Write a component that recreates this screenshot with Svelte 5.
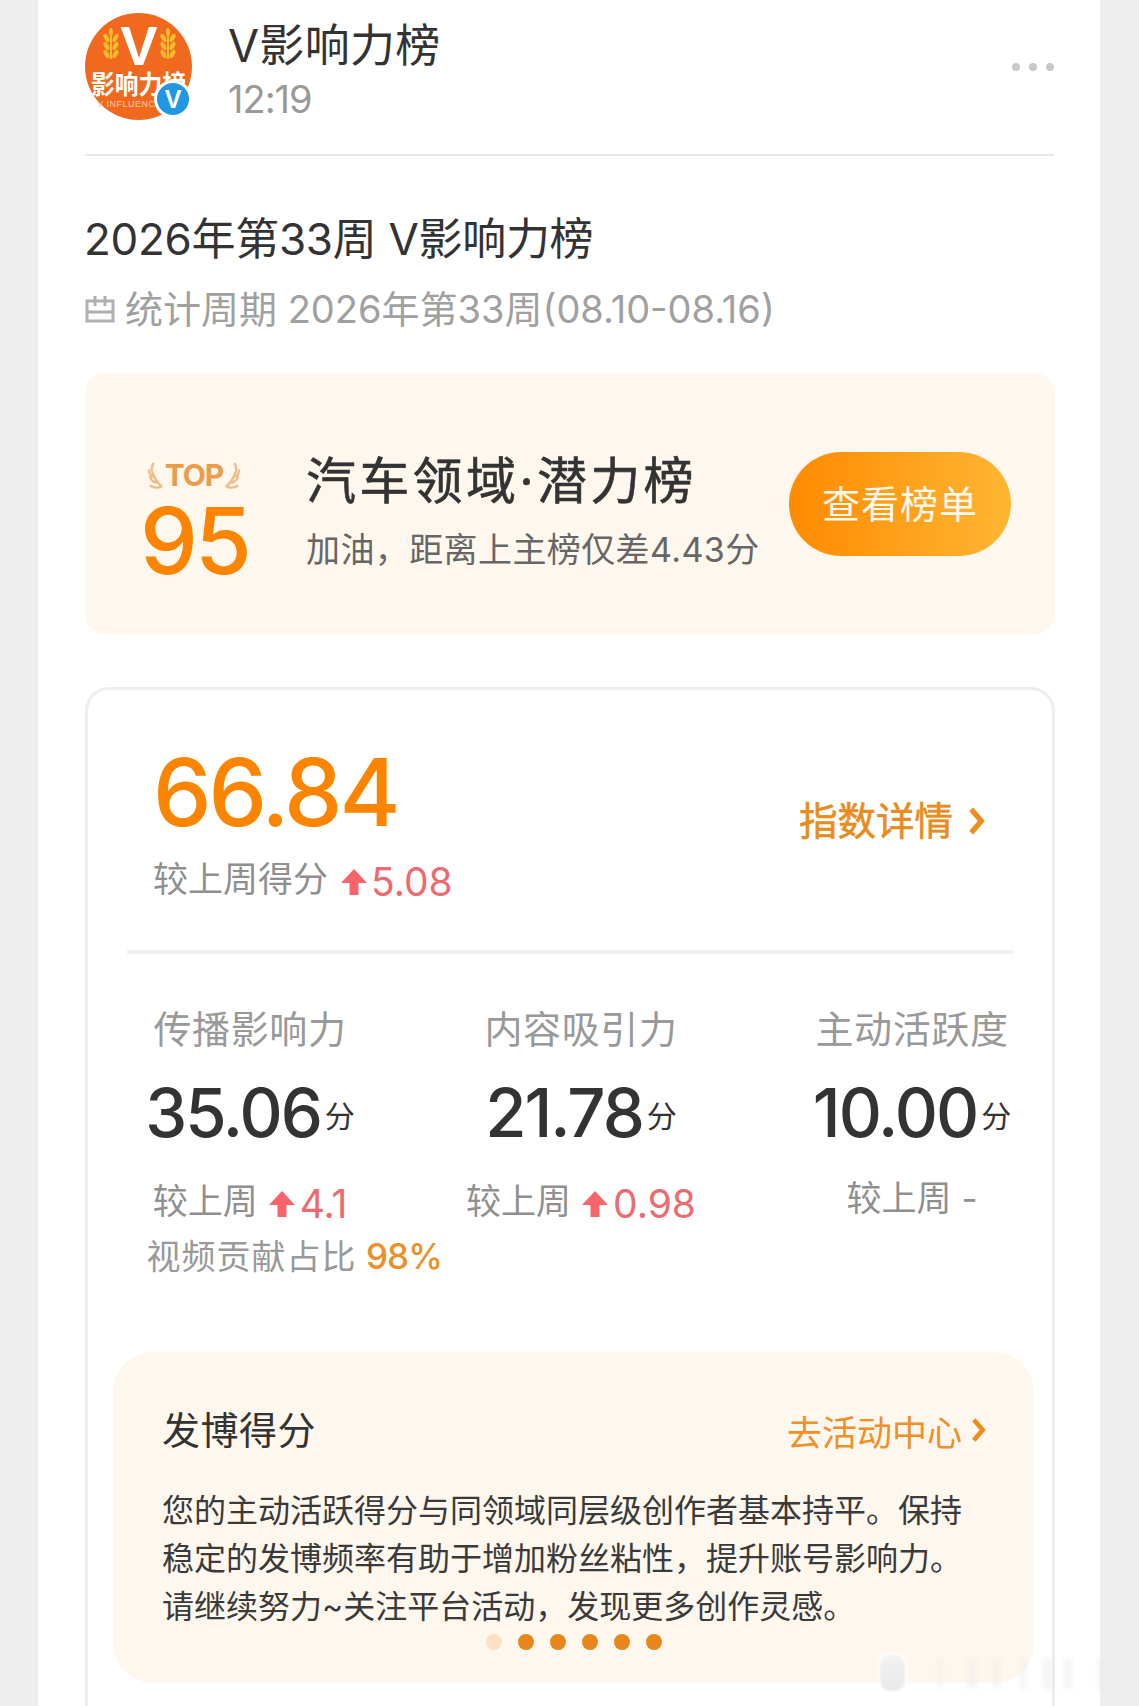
<script lang="ts">
  const stats = [
    { label: '传播影响力', value: '35.06', delta: '4.1', note: true },
    { label: '内容吸引力', value: '21.78', delta: '0.98', note: false },
    { label: '主动活跃度', value: '10.00', delta: null, note: false },
  ];
  const dots = [0, 1, 2, 3, 4, 5];
  // blurred watermark strokes, bottom right corner
  const marks = [
    { left: 880, width: 25, strong: true },
    { left: 937, width: 6 },
    { left: 967, width: 10 },
    { left: 993, width: 7 },
    { left: 1020, width: 7 },
    { left: 1042, width: 11 },
    { left: 1063, width: 10 },
    { left: 1097, width: 6 },
  ];
  const leaves = [0, 8, 16];
</script>

{#snippet upArrow()}
  <svg class="arrow" viewBox="0 0 28 28" aria-hidden="true">
    <path d="M14 1 L27 15 H18.5 V27 H9.5 V15 H1 Z" fill="#f9646a" />
  </svg>
{/snippet}

{#snippet chevron(cls)}
  <svg class={cls} viewBox="0 0 16 28" aria-hidden="true">
    <path d="M3 3 L12.5 14 L3 25" fill="none" stroke="#f08c1e" stroke-width="5" />
  </svg>
{/snippet}

{#snippet wheat(x)}
  <g fill="#f6bb2c" transform="translate({x} 0)">
    <rect x="-1" y="20" width="2" height="26" />
    <ellipse cx="0" cy="19" rx="2" ry="4" />
    {#each leaves as l}
      <ellipse cx="-4.5" cy={25 + l} rx="2.3" ry="4.6" transform="rotate(-28 -4.5 {25 + l})" />
      <ellipse cx="4.5" cy={25 + l} rx="2.3" ry="4.6" transform="rotate(28 4.5 {25 + l})" />
    {/each}
  </g>
{/snippet}

<div class="page">
  <main class="post">
    <header class="head">
      <div class="avatar">
        <svg viewBox="0 0 107 107" width="107" height="107" aria-hidden="true">
          <circle cx="53.5" cy="53.5" r="53.5" fill="#f0691f" />
          <text x="54" y="52" class="logo-v" text-anchor="middle">V</text>
          {@render wheat(26)}
          {@render wheat(83)}
          <text x="6" y="81" class="logo-cn" textLength="95" lengthAdjust="spacingAndGlyphs">影响力榜</text>
          <text x="12" y="94" class="logo-en">V INFLUENCE</text>
        </svg>
        <span class="badge">V</span>
      </div>
      <div class="who">
        <div class="name">V影响力榜</div>
        <div class="time">12:19</div>
      </div>
      <div class="more"><i></i><i></i><i></i></div>
    </header>

    <h1 class="title">2026年第33周 V影响力榜</h1>
    <div class="period">
      <svg class="cal" viewBox="0 0 30 28" aria-hidden="true">
        <path d="M2 6 H28 V26 H2 Z M2 17 H28 M10 1 V11 M20 1 V11" fill="none" stroke="#b0b0b0" stroke-width="3" />
      </svg>
      <span>统计周期 2026年第33周(08.10-08.16)</span>
    </div>

    <section class="banner">
      <div class="rank">
        <div class="top">
          <svg viewBox="0 0 16 30" class="laurel" aria-hidden="true">
            <path d="M6 2 C3 7 4 12 6 15 C8 20 11 25 15 27 M2 26 C6 29 11 29 15 27 M2 16 C3 20 6 23 10 23 M1 9 C1 13 3 16 6 17" fill="none" stroke="#eebd85" stroke-width="2.5" />
          </svg>
          <span>TOP</span>
          <svg viewBox="0 0 16 30" class="laurel flip" aria-hidden="true">
            <path d="M6 2 C3 7 4 12 6 15 C8 20 11 25 15 27 M2 26 C6 29 11 29 15 27 M2 16 C3 20 6 23 10 23 M1 9 C1 13 3 16 6 17" fill="none" stroke="#eebd85" stroke-width="2.5" />
          </svg>
        </div>
        <div class="rank-num">95</div>
      </div>
      <div class="rank-text">
        <div class="rank-title">汽车领域·潜力榜</div>
        <div class="rank-sub">加油，距离上主榜仅差4.43分</div>
      </div>
      <div class="btn">查看榜单</div>
    </section>

    <section class="card">
      <div class="score-row">
        <div>
          <div class="score">66.84</div>
          <div class="compare">
            <span class="compare-label">较上周得分</span>
            {@render upArrow()}<span class="up">5.08</span>
          </div>
        </div>
        <div class="detail">指数详情 {@render chevron('chev-lg')}</div>
      </div>
      <div class="rule"></div>

      <div class="stats">
        {#each stats as s}
          <div class="stat">
            <div class="stat-label">{s.label}</div>
            <div class="stat-value">{s.value}<small>分</small></div>
            <div class="stat-delta">
              较上周
              {#if s.delta}
                {@render upArrow()}<span class="up">{s.delta}</span>
              {:else}
                -
              {/if}
            </div>
            {#if s.note}
              <div class="note"><span>视频贡献占比</span> <b>98%</b></div>
            {/if}
          </div>
        {/each}
      </div>

      <div class="tip">
        <div class="tip-head">
          <span class="tip-title">发博得分</span>
          <span class="tip-link">去活动中心{@render chevron('chev-sm')}</span>
        </div>
        <p>您的主动活跃得分与同领域同层级创作者基本持平。保持<br />稳定的发博频率有助于增加粉丝粘性，提升账号影响力。<br />请继续努力~关注平台活动，发现更多创作灵感。</p>
        <div class="dots">
          {#each dots as d}
            <span class:light={d === 0}></span>
          {/each}
        </div>
      </div>
    </section>
  </main>

  {#each marks as m}
    <span class="mark" class:strong={m.strong} style:left="{m.left}px" style:width="{m.width}px"></span>
  {/each}
</div>

<style>
  :global(body) {
    margin: 0;
    background: #eeeeee;
  }

  .page {
    position: relative;
    width: 1139px;
    height: 1706px;
    overflow: hidden;
    background: #eeeeee;
    font-family: Inter, "Noto Sans CJK SC", sans-serif;
    color: #333;
  }

  .post {
    width: 1062px;
    height: 1706px;
    margin-left: 38px;
    padding: 0 45px 0 47px;
    box-sizing: border-box;
    background: #fff;
    overflow: hidden;
  }

  .head {
    display: flex;
    align-items: flex-start;
    height: 156px;
    padding-top: 13px;
    box-sizing: border-box;
    border-bottom: 2px solid #e8e8e8;
    margin-right: 1px;
  }

  .avatar {
    position: relative;
    width: 107px;
    height: 107px;
    flex: none;
  }

  .avatar svg {
    display: block;
  }

  .logo-v {
    font: 700 56px "Liberation Sans", sans-serif;
    fill: #fff;
  }

  .logo-cn {
    font: 700 26px "Noto Sans CJK SC", sans-serif;
    fill: #fff;
  }

  .logo-en {
    font: 400 9px "Liberation Sans", sans-serif;
    fill: #ffc9a3;
    letter-spacing: 0.5px;
  }

  .badge {
    position: absolute;
    right: 0;
    bottom: 2px;
    width: 32px;
    height: 32px;
    border: 3px solid #fff;
    border-radius: 50%;
    background: #2196e3;
    color: #fff;
    font: 700 25px/32px "Liberation Sans", sans-serif;
    text-align: center;
  }

  .who {
    margin-left: 36px;
  }

  .name {
    font-size: 45px;
    line-height: 56px;
    margin-top: 5px;
    letter-spacing: 0.3px;
  }

  .time {
    font-size: 38px;
    line-height: 44px;
    color: #999;
    margin-top: 3px;
    letter-spacing: -1px;
  }

  .more {
    margin-left: auto;
    margin-top: 50px;
    display: flex;
    gap: 9px;
  }

  .more i {
    width: 8px;
    height: 8px;
    border-radius: 50%;
    background: #c8c8c8;
  }

  .title {
    margin: 53px 0 0 -1px;
    font-size: 44px;
    line-height: 60px;
    font-weight: 400;
    letter-spacing: -0.3px;
  }

  .period {
    display: flex;
    align-items: center;
    margin-top: 15px;
    font-size: 38px;
    line-height: 50px;
    color: #a0a0a0;
  }

  .cal {
    width: 30px;
    height: 28px;
    margin-right: 10px;
  }

  .banner {
    display: flex;
    align-items: center;
    height: 261px;
    margin-top: 39px;
    background: #fef7ee;
    border-radius: 20px;
    box-sizing: border-box;
    padding-left: 55px;
  }

  .rank {
    width: 108px;
    flex: none;
    margin-top: 30px;
    text-align: center;
  }

  .top {
    display: flex;
    align-items: center;
    justify-content: center;
    gap: 2px;
    font-size: 30px;
    font-weight: 700;
    color: #ea9c4b;
    line-height: 34px;
    letter-spacing: -1px;
  }

  .laurel {
    width: 15px;
    height: 30px;
    flex: none;
  }

  .laurel.flip {
    transform: scaleX(-1);
  }

  .rank-num {
    font-size: 92px;
    line-height: 76px;
    font-weight: 500;
    color: #fb8500;
    letter-spacing: -3px;
    margin-top: 11px;
  }

  .rank-text {
    margin: 13px 0 0 58px;
    flex: none;
  }

  .rank-title {
    font-size: 50px;
    line-height: 66px;
    letter-spacing: 3.3px;
    -webkit-text-stroke: 0.6px #333;
    white-space: nowrap;
  }

  .rank-sub {
    font-size: 34px;
    line-height: 46px;
    letter-spacing: 0.4px;
    color: #666;
    margin-top: 13px;
    white-space: nowrap;
  }

  .btn {
    margin-left: auto;
    margin-right: 44px;
    width: 222px;
    height: 104px;
    border-radius: 52px;
    background: linear-gradient(90deg, #ff8a00, #ffb634);
    color: #fff8ee;
    font-size: 38px;
    line-height: 104px;
    text-align: center;
    flex: none;
    letter-spacing: 1px;
  }

  .card {
    margin-top: 53px;
    height: 1100px;
    border: 3px solid #eeeeee;
    border-radius: 24px;
    box-sizing: border-box;
    padding: 0 24px;
  }

  .score-row {
    display: flex;
    justify-content: space-between;
    align-items: flex-start;
    padding: 55px 43px 0 41px;
    height: 260px;
    box-sizing: border-box;
  }

  .score {
    font-size: 93px;
    line-height: 94px;
    font-weight: 500;
    color: #fb8500;
    letter-spacing: -3px;
  }

  .compare {
    display: flex;
    align-items: center;
    margin-top: 14px;
    font-size: 35px;
    line-height: 46px;
    color: #8f8f8f;
  }

  .compare-label {
    margin-right: 12px;
  }

  .arrow {
    width: 28px;
    height: 28px;
    margin: 6px 3px 0 0;
    flex: none;
  }

  .up {
    font-size: 39px;
    color: #ec6a70;
    margin-top: 6px;
  }

  .detail {
    display: flex;
    align-items: center;
    gap: 15px;
    margin-top: 51px;
    font-size: 38.5px;
    line-height: 50px;
    color: #e88c20;
    -webkit-text-stroke: 0.6px #e88c20;
  }

  .chev-lg {
    width: 17px;
    height: 30px;
  }

  .rule {
    height: 4px;
    margin: 0 15px;
    background: #f0f0f0;
  }

  .stats {
    display: flex;
    margin: 51px 0 0 -27.5px;
    height: 347px;
  }

  .stat {
    position: relative;
    width: 331px;
    text-align: center;
    flex: none;
  }

  .stat-label {
    font-size: 38px;
    line-height: 48px;
    letter-spacing: 0.6px;
    color: #999;
  }

  .stat-value {
    font-size: 67px;
    line-height: 76px;
    margin-top: 22px;
    font-weight: 500;
    color: #333;
    letter-spacing: -2px;
  }

  .stat-value small {
    font-size: 30px;
    font-weight: 400;
    margin-left: 4px;
    letter-spacing: 0;
    vertical-align: 10px;
  }

  .stat-delta {
    display: flex;
    justify-content: center;
    align-items: center;
    margin-top: 21px;
    font-size: 35px;
    line-height: 46px;
    color: #8f8f8f;
    gap: 10px;
  }

  .stat-delta .arrow {
    margin-right: -6px;
  }

  .note {
    position: absolute;
    left: 62px;
    top: 228px;
    font-size: 34px;
    line-height: 46px;
    color: #999;
    white-space: nowrap;
  }

  .note span {
    letter-spacing: 1px;
  }

  .note b {
    font-size: 35px;
    font-weight: 500;
    letter-spacing: -1px;
    color: #e8912a;
  }

  .tip {
    box-sizing: border-box;
    width: 921px;
    height: 331px;
    margin-left: 1px;
    padding: 49px 48px 0 49px;
    background: #fef7ee;
    border-radius: 40px;
  }

  .tip-head {
    display: flex;
    justify-content: space-between;
    align-items: center;
    height: 58px;
  }

  .tip-title {
    font-size: 38px;
    line-height: 58px;
    letter-spacing: 0.5px;
  }

  .tip-link {
    display: flex;
    align-items: center;
    gap: 9px;
    font-size: 35px;
    color: #ee8f27;
  }

  .chev-sm {
    width: 15px;
    height: 26px;
  }

  .tip p {
    margin: 28px 0 0;
    font-size: 32px;
    line-height: 48px;
    color: #3a3a3a;
    white-space: nowrap;
  }

  .dots {
    display: flex;
    justify-content: center;
    gap: 16px;
    margin-top: 3px;
  }

  .dots span {
    width: 16px;
    height: 16px;
    border-radius: 50%;
    background: #e8851c;
  }

  .dots span.light {
    background: #fce0c4;
  }

  .mark {
    position: absolute;
    top: 1658px;
    height: 32px;
    background: rgba(232, 232, 232, 0.4);
    border-radius: 4px;
    filter: blur(2px);
  }

  .mark.strong {
    top: 1655px;
    height: 36px;
    background: linear-gradient(#f2f2f2, #e9e9e9);
    box-shadow: 0 0 0 2px #fff;
    border-radius: 10px;
    filter: blur(1px);
  }
</style>
